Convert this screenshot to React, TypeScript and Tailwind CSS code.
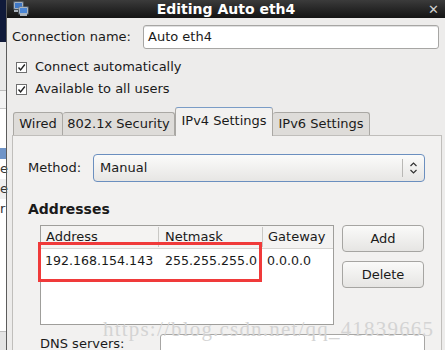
import React from "react";

const font = { fontFamily: '"DejaVu Sans", "Liberation Sans", sans-serif' };

function Check() {
  return (
    <span className="flex h-[11px] w-[11px] items-center justify-center border border-[#6f6f6f] bg-white">
      <svg width="9" height="9" viewBox="0 0 9 9">
        <path d="M1.5 4.5 L3.6 7 L7.8 1.5" fill="none" stroke="#222" strokeWidth="1.4" />
      </svg>
    </span>
  );
}

function NetIcon() {
  return (
    <svg width="16" height="16" viewBox="0 0 16 16">
      <rect x="1" y="1" width="9" height="7" fill="#dfe6ee" stroke="#6b7a8c" />
      <rect x="2" y="2" width="7" height="5" fill="#3f78c7" />
      <rect x="6" y="6" width="9" height="7" fill="#e8edf2" stroke="#6b7a8c" />
      <rect x="7" y="7" width="7" height="5" fill="#4a86d6" />
      <rect x="7" y="13" width="7" height="2" fill="#aab3bd" />
      <rect x="1" y="9" width="4" height="2" fill="#aab3bd" />
    </svg>
  );
}

export default function App() {
  return (
    <div className="flex h-[350px] w-[445px] overflow-hidden bg-[#edeceb] text-[13px] text-[#1a1a1a]" style={font}>
      {/* strip of the window behind */}
      <div className="flex w-[6px] shrink-0 flex-col bg-white">
        <div className="h-[42px] shrink-0 bg-[#101a3a]" />
        <div className="h-[48px] shrink-0 bg-[#e9e9e9]" />
        <div className="h-[1px] shrink-0 bg-[#bdbdbd]" />
        <div className="h-[17px] shrink-0 bg-[#f3f3f3]" />
        <div className="h-[1px] shrink-0 bg-[#c8c8c8]" />
        <div className="h-[39px] shrink-0 bg-white" />
        <div className="h-[11px] shrink-0 bg-[#6f94c8]" />
        <div className="h-[20px] shrink-0 bg-white leading-[20px] text-[#333]">e</div>
        <div className="h-[20px] shrink-0 bg-[#efefef] leading-[20px] text-[#333]">e</div>
        <div className="h-[20px] shrink-0 bg-white leading-[20px] text-[#333]">r</div>
        <div className="flex-1 bg-white" />
        <div className="h-[1px] shrink-0 bg-[#bdbdbd]" />
        <div className="h-[18px] shrink-0 bg-[#e4e4e4]" />
      </div>
      <div className="w-[1px] shrink-0 bg-[#5c5c5c]" />

      <div className="relative flex min-w-0 flex-1 flex-col">
        {/* title bar */}
        <div className="relative flex h-[18px] shrink-0 items-center bg-gradient-to-b from-[#3b3b3b] to-[#141414]">
          <div className="absolute left-[6px] top-[1px]">
            <NetIcon />
          </div>
          <div className="flex-1 text-center text-[14px] font-bold leading-none text-white">Editing Auto eth4</div>
          <div className="absolute right-[6px] top-[3px] text-[13px] font-bold leading-none text-[#cfcfcf]">✕</div>
        </div>

        {/* connection name */}
        <div className="mt-[7px] flex h-[24px] shrink-0 items-center pl-[5px] pr-[6px]">
          <span className="w-[131px]">Connection name:</span>
          <div className="flex h-[24px] flex-1 items-center rounded-[3px] border border-[#a7a6a4] bg-white pl-[4px] shadow-[inset_0_1px_0_#e0e0e0]">
            Auto eth4
          </div>
        </div>

        <div className="mt-[12px] flex h-[12px] shrink-0 items-center gap-[8px] pl-[9px]">
          <Check />
          <span>Connect automatically</span>
        </div>
        <div className="mt-[10px] flex h-[12px] shrink-0 items-center gap-[8px] pl-[9px]">
          <Check />
          <span>Available to all users</span>
        </div>

        {/* tabs */}
        <div className="mt-[12px] flex h-[28px] shrink-0 items-end pl-[6px]">
          <div className="flex h-[23px] w-[50px] items-center justify-center rounded-t-[3px] border border-b-0 border-[#aaa8a4] bg-[#dedcd9]">Wired</div>
          <div className="flex h-[23px] w-[112px] items-center justify-center rounded-t-[3px] border border-b-0 border-l-0 border-[#aaa8a4] bg-[#dedcd9]">802.1x Security</div>
          <div className="relative z-10 mb-[-1px] flex h-[29px] w-[98px] items-center justify-center rounded-t-[3px] border border-b-0 border-[#aaa8a4] border-t-[#7a9cc6] bg-[#f2f1f0] pb-[2px]">IPv4 Settings</div>
          <div className="flex h-[23px] w-[97px] items-center justify-center rounded-t-[3px] border border-b-0 border-l-0 border-[#aaa8a4] bg-[#dedcd9]">IPv6 Settings</div>
        </div>

        {/* notebook page */}
        <div className="ml-[5px] mr-[3px] flex min-h-0 flex-1 flex-col overflow-hidden border border-b-0 border-[#c0bebb] bg-[#f2f1f0] pl-[15px]">
          <div className="mt-[18px] flex h-[28px] shrink-0 items-center">
            <span className="w-[65px]">Method:</span>
            <div className="flex h-[28px] w-[332px] items-center rounded-[4px] border border-[#6b8fbf] bg-gradient-to-b from-[#fbfbfa] to-[#e7e6e4]">
              <span className="flex-1 pl-[6px]">Manual</span>
              <div className="h-[18px] w-[1px] bg-[#b9b8b5]" />
              <svg className="mx-[6px]" width="9" height="14" viewBox="0 0 9 14">
                <path d="M1.5 5 L4.5 2 L7.5 5 M1.5 9 L4.5 12 L7.5 9" fill="none" stroke="#333" strokeWidth="1.2" />
              </svg>
            </div>
          </div>

          <div className="mt-[19px] shrink-0 text-[14px] font-bold leading-[17px]">Addresses</div>

          <div className="mt-[7px] flex shrink-0 gap-[8px] pl-[12px]">
            <div className="flex h-[100px] w-[294px] flex-col border border-[#9f9e9b] bg-white">
              <div className="flex h-[23px] items-center border-b border-[#d6d5d2] bg-[#f4f3f2]">
                <span className="w-[118px] border-r border-[#c9c8c5] pl-[5px]">Address</span>
                <span className="w-[104px] border-r border-[#c9c8c5] pl-[6px]">Netmask</span>
                <span className="pl-[5px]">Gateway</span>
              </div>
              <div className="flex h-[24px] items-center text-[12.6px]">
                <span className="w-[118px] pl-[4px]">192.168.154.143</span>
                <span className="w-[104px] pl-[6px]">255.255.255.0</span>
                <span className="pl-[4px]">0.0.0.0</span>
              </div>
            </div>
            <div className="flex flex-col gap-[9px]">
              <div className="flex h-[27px] w-[82px] items-center justify-center rounded-[4px] border border-[#a6a5a2] bg-gradient-to-b from-[#fafaf9] to-[#e6e5e3]">Add</div>
              <div className="flex h-[27px] w-[82px] items-center justify-center rounded-[4px] border border-[#a6a5a2] bg-gradient-to-b from-[#fafaf9] to-[#e6e5e3]">Delete</div>
            </div>
          </div>

          <div className="mt-[9px] flex shrink-0 items-start pl-[12px]">
            <span className="w-[120px] leading-[20px]">DNS servers:</span>
            <div className="h-[30px] w-[265px] rounded-[3px] border border-[#a7a6a4] bg-white" />
          </div>
        </div>

        {/* red highlight annotation */}
        <div className="pointer-events-none absolute left-[31px] top-[242px] h-[40px] w-[224px] border-[3px] border-[#f03a3a]" />

        {/* watermark */}
        <div
          className="pointer-events-none absolute left-[96px] top-[319px] whitespace-nowrap text-[21px] leading-none tracking-[1.2px] text-[#d4d4d4]"
          style={{ fontFamily: '"Liberation Serif", "DejaVu Serif", serif' }}
        >
          https://blog.csdn.net/qq_41839665
        </div>
      </div>
    </div>
  );
}
